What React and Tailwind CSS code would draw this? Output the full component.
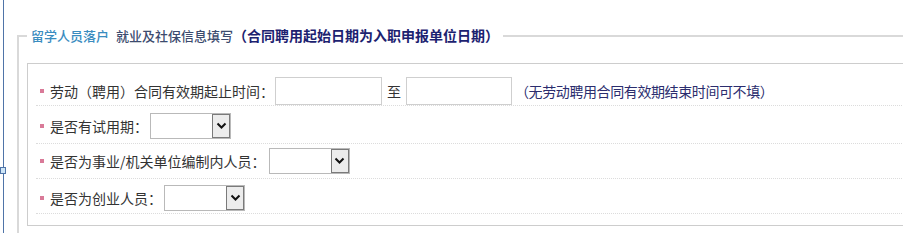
import React from 'react';

const font = "font-['SimSun','Noto_Sans_CJK_SC',sans-serif]";

function Star() {
  return <span className="mr-[6px] inline-block h-[4px] w-[4px] shrink-0 bg-[#d97a98]" />;
}

function FakeSelect({ className = '' }) {
  return (
    <div className={`flex h-[26px] w-[81px] shrink-0 border border-[#b9b9b9] bg-white ${className}`}>
      <div className="flex-1" />
      <div className="flex w-[18px] items-center justify-center border border-[#7a7a7a] bg-[#ececec]">
        <svg width="11" height="8" viewBox="0 0 11 8">
          <path d="M1.5 1.5 L5.5 5.5 L9.5 1.5" fill="none" stroke="#111" strokeWidth="2" />
        </svg>
      </div>
    </div>
  );
}

function Row({ children, className = '' }) {
  return (
    <div className={`flex items-center border-b border-dotted border-[#dcdcdc] pl-[4px] ${className}`}>
      {children}
    </div>
  );
}

export default function App() {
  return (
    <div className={`h-[233px] w-[903px] overflow-hidden bg-white ${font}`}>
      <div className="relative ml-[3px] flex h-full border-l border-[#4f74a8] pl-[13px] pt-[26px]">
        <span className="absolute left-[-4px] top-[167px] h-[7px] w-[6px] border border-[#4f74a8] bg-[#cfe6f7]" />
        <fieldset className="h-[260px] w-[920px] shrink-0 border-2 border-[#d9d9d9] pl-[8px]">
          <legend className="px-[4px] text-[13px] font-medium leading-[18px]">
            <span className="text-[#3a8cbf]">留学人员落户</span>
            <span className="ml-[7px] text-[#3c4b6e]">就业及社保信息填写</span>
            <span className="text-[14px] font-bold text-[#1c2270]">（合同聘用起始日期为入职申报单位日期）</span>
          </legend>
          <div className="mt-[18px] border border-[#cdcdcd] px-[8px] pb-[11px] pt-[12px] text-[14px] leading-[18px] text-[#333]">
            <Row className="h-[30px]">
              <Star />
              <span>劳动（聘用）合同有效期起止时间：</span>
              <input className="ml-[1px] h-[28px] w-[107px] border border-[#cfcfcf] outline-none" />
              <span className="mx-[5px]">至</span>
              <input className="h-[28px] w-[106px] border border-[#cfcfcf] outline-none" />
              <span className="ml-[3px] tracking-[-0.4px] text-[#2b2d6e]">（无劳动聘用合同有效期结束时间可不填）</span>
            </Row>
            <Row className="h-[38px] pt-[3px]">
              <Star />
              <span>是否有试用期：</span>
              <FakeSelect className="ml-[2px]" />
            </Row>
            <Row className="h-[35px]">
              <Star />
              <span>是否为事业/机关单位编制内人员：</span>
              <FakeSelect className="ml-[3px]" />
            </Row>
            <Row className="h-[35px] pt-[3px]">
              <Star />
              <span>是否为创业人员：</span>
              <FakeSelect className="ml-[2px]" />
            </Row>
          </div>
        </fieldset>
      </div>
    </div>
  );
}
